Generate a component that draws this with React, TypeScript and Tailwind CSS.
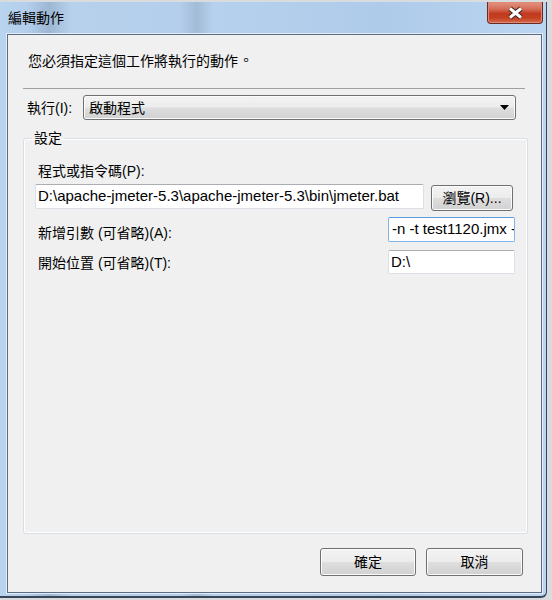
const BTN =
  "flex items-center rounded-[3px] border border-[#707070] bg-[linear-gradient(#f3f3f3_0%,#ececec_48%,#dedede_52%,#d1d1d1_100%)] shadow-[inset_0_0_0_1px_#fbfbfb] text-[14px] leading-none";

function CloseButton() {
  return (
    <div className="mr-[3px] flex h-[22px] w-[56px] items-center justify-center rounded-b-[4px] border border-t-0 border-[#6b2a1f] bg-[linear-gradient(#e39584_0%,#d36a54_35%,#c23a20_55%,#c4401f_75%,#d56a50_100%)] shadow-[inset_0_0_0_1px_#df8a76]">
      <svg width="17" height="14" viewBox="0 0 17 14">
        <path d="M3 2.5 L14 11.5 M14 2.5 L3 11.5" stroke="#3a2420" strokeWidth="5" />
        <path d="M3 2.5 L14 11.5 M14 2.5 L3 11.5" stroke="#ffffff" strokeWidth="3" />
      </svg>
    </div>
  );
}

function TextBox({
  width,
  height,
  focused,
  children,
}: {
  width: string;
  height: string;
  focused?: boolean;
  children: React.ReactNode;
}) {
  return (
    <div
      className={`${width} ${height} flex items-center overflow-hidden rounded-[2px] border bg-white pl-[2px] text-[15px] whitespace-nowrap ${
        focused
          ? "border-[#7eb4ea] border-t-[#569de5]"
          : "border-[#dbdfe6] border-t-[#abadb3]"
      }`}
    >
      {children}
    </div>
  );
}

export default function App() {
  return (
    <div
      lang="zh-Hant-TW"
      className="h-[600px] w-[552px] bg-[#d9dcdf] pt-[2px] font-['Liberation_Sans','Noto_Sans_CJK_TC',sans-serif] text-[14px] text-black"
    >
      <div className="flex h-[596px] w-[547px] flex-col rounded-br-[6px] border-r border-b-2 border-[#3a4555] bg-[linear-gradient(90deg,#b9d4ef_0%,#b3ceeb_5%,#9db7d3_9%,#b7d1ed_13%,#b4cfeb_33%,#a2bbd6_36%,#b6d1ed_39%,#afcbea_70%,#b9d5f1_100%)]">
        {/* title bar */}
        <div className="flex h-[32px] items-start justify-between">
          <span className="pt-[6px] pl-[8px] leading-[20px]">編輯動作</span>
          <CloseButton />
        </div>

        {/* client area */}
        <div className="mr-[4px] mb-[3px] ml-[7px] flex h-[559px] flex-col border border-[#5a6d86] bg-[#f0f0f0] shadow-[0_0_0_1px_#e4edf7]">
          <p className="mt-[16px] ml-[20px] leading-[20px]">
            您必須指定這個工作將執行的動作
            <span className="inline-block translate-x-[1px] translate-y-[-1px]">。</span>
          </p>
          <div className="mt-[17px] mr-[16px] ml-[15px] h-px bg-[#a0a0a0]" />

          <div className="mt-[6px] ml-[19px] flex items-center">
            <span className="w-[56px] leading-[20px]">執行(I):</span>
            <div className={`${BTN} h-[25px] w-[433px] justify-between pr-[6px] pl-[5px]`}>
              <span>啟動程式</span>
              <svg width="9" height="5" viewBox="0 0 9 5">
                <path d="M0 0 H9 L4.5 5 Z" fill="#000" />
              </svg>
            </div>
          </div>

          <fieldset className="mt-[8px] mr-[13px] ml-[15px] h-[406px] rounded-[3px] border border-[#d5dfe5] shadow-[inset_0_0_0_1px_#ffffff]">
            <legend className="ml-[8px] px-[2px] leading-[20px]">設定</legend>

            <p className="mt-[13px] ml-[14px] leading-[20px]">程式或指令碼(P):</p>
            <div className="mt-[3px] ml-[11px] flex items-start gap-[7px]">
              <TextBox width="w-[389px]" height="h-[25px]">
                D:\apache-jmeter-5.3\apache-jmeter-5.3\bin\jmeter.bat
              </TextBox>
              <div className={`${BTN} mt-[1px] h-[26px] w-[82px] justify-center`}>瀏覽(R)...</div>
            </div>

            <div className="mt-[6px] flex items-start justify-between pr-[12px] pl-[14px]">
              <span className="mt-[6px] leading-[20px]">新增引數 (可省略)(A):</span>
              <TextBox width="w-[127px]" height="h-[25px]" focused>
                <span className="mr-[1px] h-[17px] w-px bg-black" />
                -n -t test1120.jmx -l result.jtl
              </TextBox>
            </div>

            <div className="mt-[7px] flex items-start justify-between pr-[12px] pl-[14px]">
              <span className="mt-[3px] leading-[20px]">開始位置 (可省略)(T):</span>
              <TextBox width="w-[127px]" height="h-[24px]">
                D:\
              </TextBox>
            </div>
          </fieldset>

          <div className="mt-[14px] mr-[18px] flex justify-end gap-[10px]">
            <div className={`${BTN} h-[28px] w-[96px] justify-center border-[#3c7fb1] shadow-[inset_0_0_0_1px_#a8dcf6]`}>確定</div>
            <div className={`${BTN} h-[28px] w-[97px] justify-center`}>取消</div>
          </div>
        </div>
      </div>
    </div>
  );
}
